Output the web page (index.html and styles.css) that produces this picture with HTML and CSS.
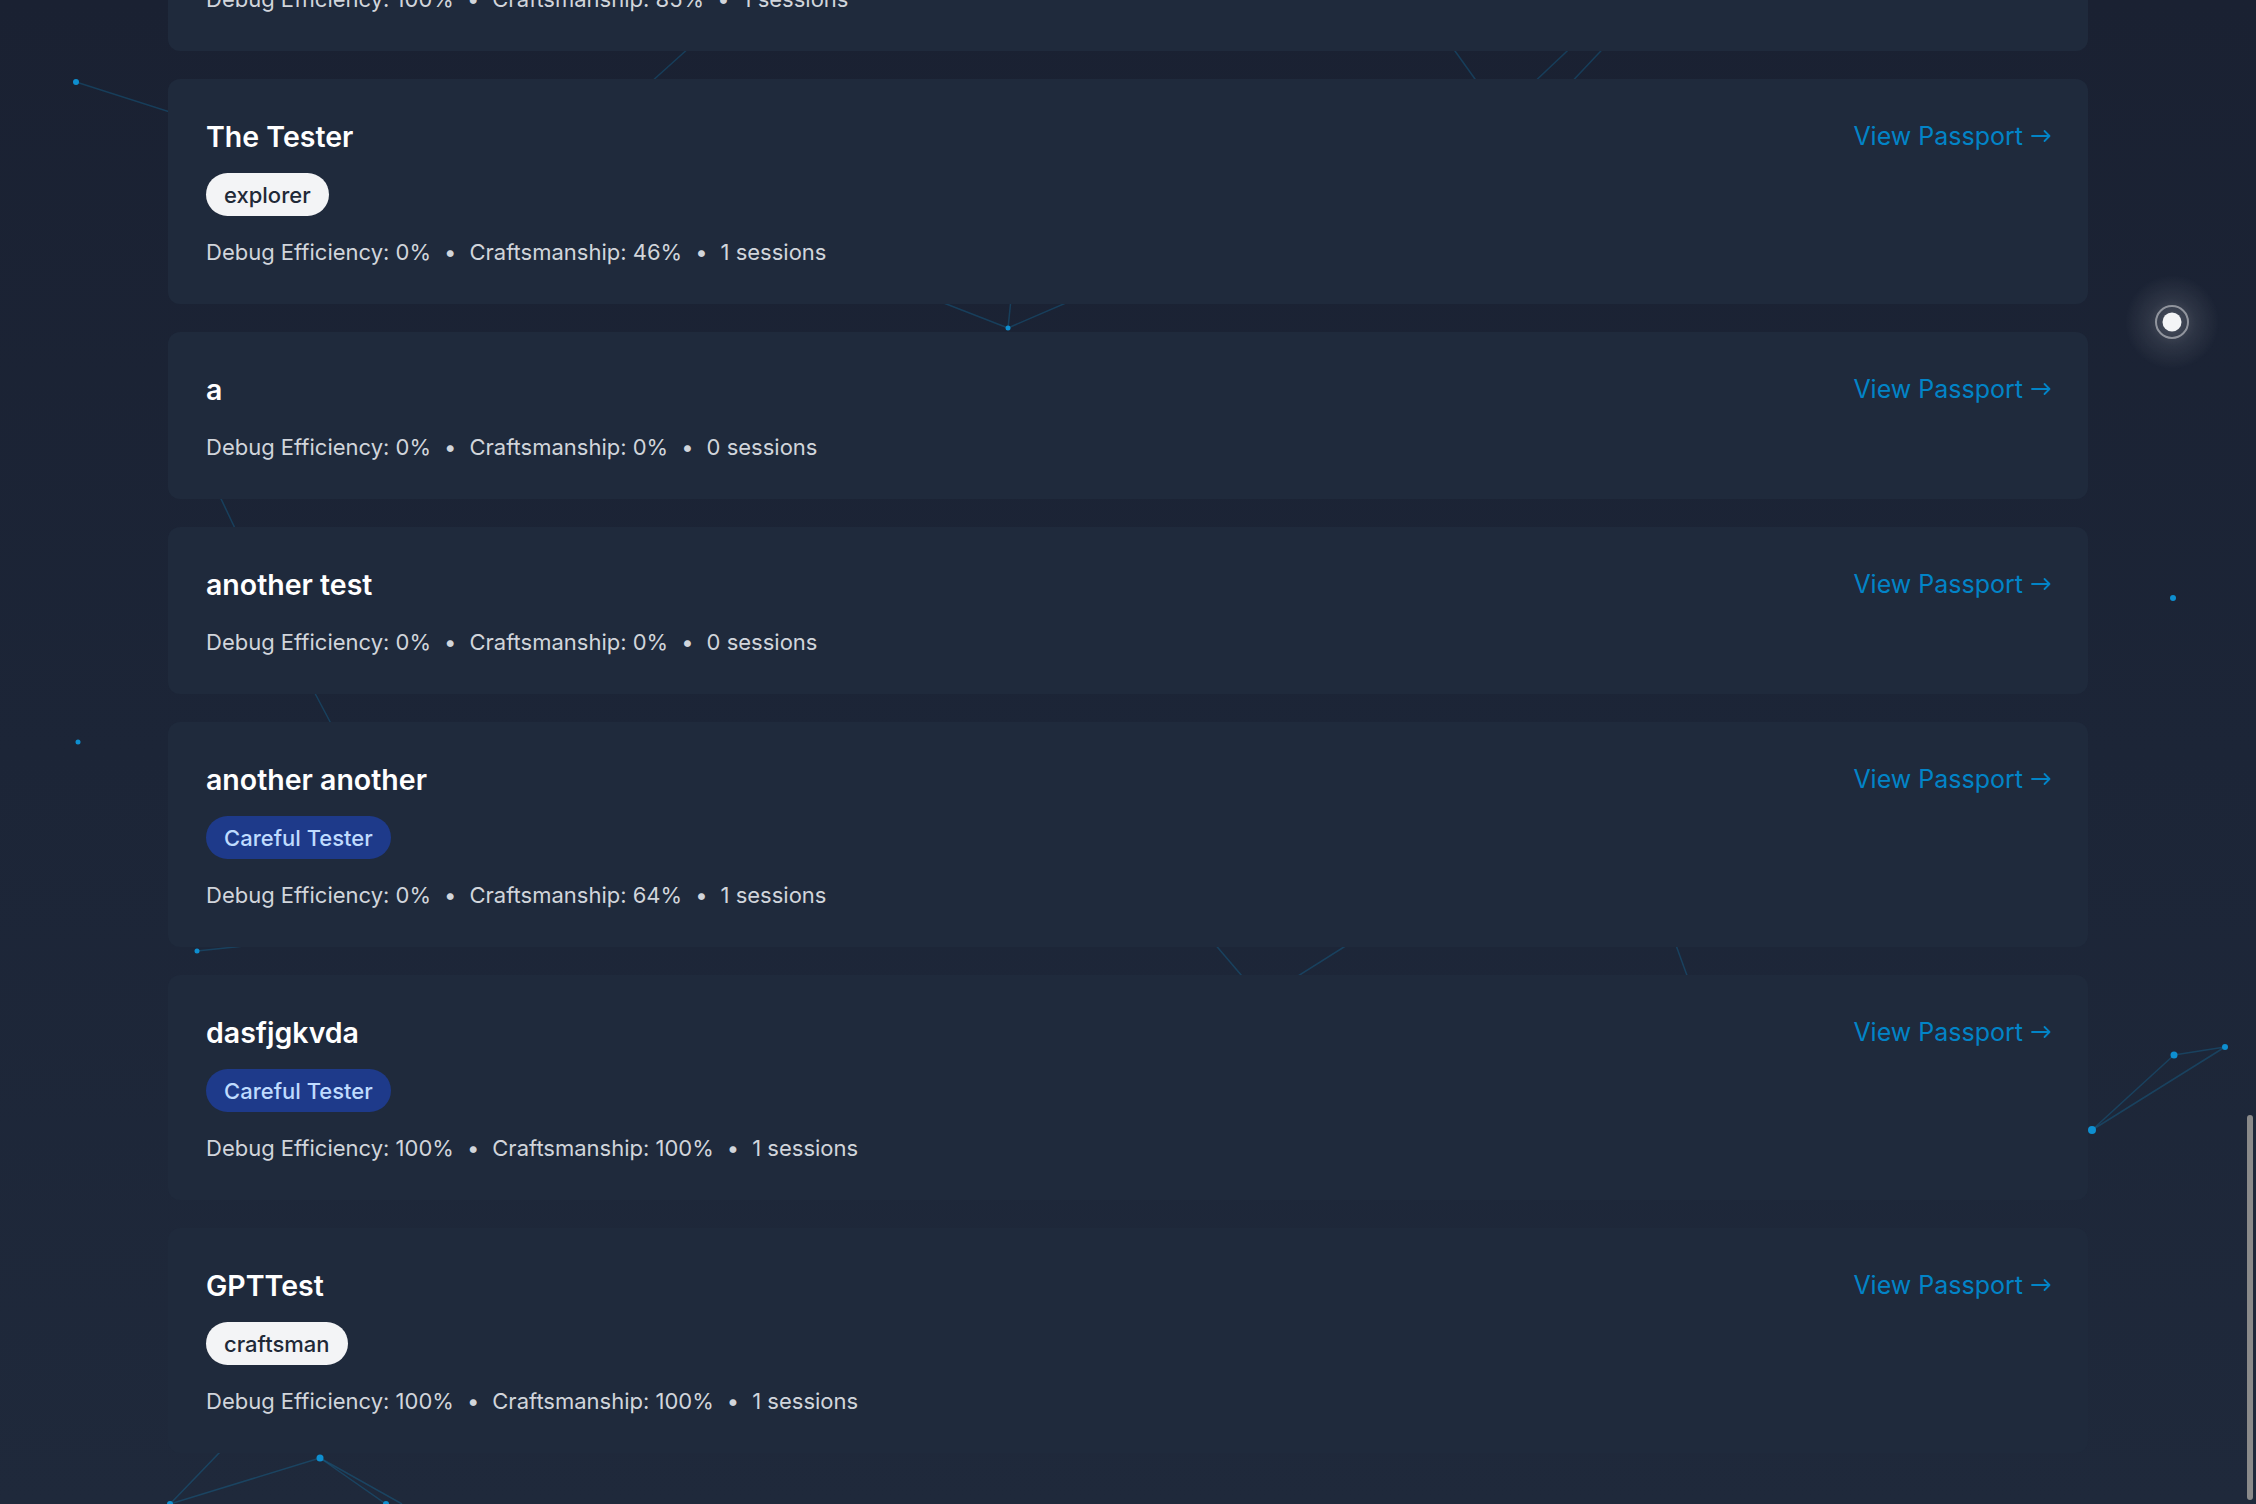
FILE: index.html
```html
<!DOCTYPE html>
<html>
<head>
  <title>Passports</title>
  <link rel="stylesheet" href="styles.css">
</head>
<body>
  <svg class="network-bg" width="2256" height="1504" viewBox="0 0 2256 1504">
    <defs>
      <radialGradient id="cursorGlow">
        <stop offset="0" stop-color="#ffffff" stop-opacity="0.22"/>
        <stop offset="0.5" stop-color="#ffffff" stop-opacity="0.08"/>
        <stop offset="1" stop-color="#ffffff" stop-opacity="0"/>
      </radialGradient>
      <symbol id="arrowRight" viewBox="0 0 20 14">
        <path d="M1 7H18.5M13.5 2L18.5 7L13.5 12" fill="none" stroke="currentColor" stroke-width="1.8" stroke-linecap="round" stroke-linejoin="round"/>
      </symbol>
    </defs>
    <g class="links">
      <line x1="76" y1="82" x2="320" y2="160"/>
      <line x1="720" y1="20" x2="620" y2="110"/>
      <line x1="1440" y1="30" x2="1490" y2="100"/>
      <line x1="1600" y1="20" x2="1510" y2="105"/>
      <line x1="1630" y1="20" x2="1550" y2="105"/>
      <line x1="900" y1="286" x2="1008" y2="328"/>
      <line x1="1110" y1="284" x2="1008" y2="328"/>
      <line x1="1013" y1="280" x2="1008" y2="328"/>
      <line x1="205" y1="465" x2="250" y2="560"/>
      <line x1="300" y1="665" x2="345" y2="750"/>
      <line x1="197" y1="951" x2="300" y2="940"/>
      <line x1="1190" y1="915" x2="1265" y2="1003"/>
      <line x1="1260" y1="1000" x2="1390" y2="918"/>
      <line x1="1665" y1="915" x2="1697" y2="1003"/>
      <line x1="2092" y1="1130" x2="2174" y2="1055"/>
      <line x1="2174" y1="1055" x2="2225" y2="1047"/>
      <line x1="2092" y1="1130" x2="2225" y2="1047"/>
      <line x1="320" y1="1458" x2="170" y2="1504"/>
      <line x1="320" y1="1458" x2="386" y2="1504"/>
      <line x1="320" y1="1458" x2="402" y2="1504"/>
      <line x1="270" y1="1400" x2="170" y2="1504"/>
    </g>
    <g class="nodes">
      <circle cx="76" cy="82" r="3"/>
      <circle cx="1008" cy="328" r="2.5"/>
      <circle cx="2173" cy="598" r="3"/>
      <circle cx="78" cy="742" r="2.5"/>
      <circle cx="197" cy="951" r="2.5"/>
      <circle cx="2092" cy="1130" r="4"/>
      <circle cx="2174" cy="1055" r="3.5"/>
      <circle cx="2225" cy="1047" r="3"/>
      <circle cx="320" cy="1458" r="3.5"/>
      <circle cx="170" cy="1504" r="3"/>
      <circle cx="386" cy="1504" r="3"/>
    </g>
    <circle cx="2172" cy="322" r="48" fill="url(#cursorGlow)"/>
    <circle cx="2172" cy="322" r="16" fill="none" stroke="#ffffff" stroke-opacity="0.45" stroke-width="2"/>
    <circle cx="2172" cy="322" r="9.5" fill="#f3f4f6"/>
  </svg>

  <main class="container">
    <ul class="passport-list">
      <li class="passport-card">
        <div class="passport-info">
          <p class="passport-stats passport-stats-first">Debug Efficiency: 100%<span class="sep">•</span>Craftsmanship: 85%<span class="sep">•</span>1 sessions</p>
        </div>
      </li>
      <li class="passport-card">
        <div class="passport-info">
          <h2 class="passport-name">The Tester</h2>
          <div class="badge-row"><span class="badge badge-light">explorer</span></div>
          <p class="passport-stats">Debug Efficiency: 0%<span class="sep">•</span>Craftsmanship: 46%<span class="sep">•</span>1 sessions</p>
        </div>
        <a class="passport-link" href="#">View Passport <svg class="arrow"><use href="#arrowRight"/></svg></a>
      </li>
      <li class="passport-card">
        <div class="passport-info">
          <h2 class="passport-name">a</h2>
          <p class="passport-stats">Debug Efficiency: 0%<span class="sep">•</span>Craftsmanship: 0%<span class="sep">•</span>0 sessions</p>
        </div>
        <a class="passport-link" href="#">View Passport <svg class="arrow"><use href="#arrowRight"/></svg></a>
      </li>
      <li class="passport-card">
        <div class="passport-info">
          <h2 class="passport-name">another test</h2>
          <p class="passport-stats">Debug Efficiency: 0%<span class="sep">•</span>Craftsmanship: 0%<span class="sep">•</span>0 sessions</p>
        </div>
        <a class="passport-link" href="#">View Passport <svg class="arrow"><use href="#arrowRight"/></svg></a>
      </li>
      <li class="passport-card">
        <div class="passport-info">
          <h2 class="passport-name">another another</h2>
          <div class="badge-row"><span class="badge badge-blue">Careful Tester</span></div>
          <p class="passport-stats">Debug Efficiency: 0%<span class="sep">•</span>Craftsmanship: 64%<span class="sep">•</span>1 sessions</p>
        </div>
        <a class="passport-link" href="#">View Passport <svg class="arrow"><use href="#arrowRight"/></svg></a>
      </li>
      <li class="passport-card">
        <div class="passport-info">
          <h2 class="passport-name">dasfjgkvda</h2>
          <div class="badge-row"><span class="badge badge-blue">Careful Tester</span></div>
          <p class="passport-stats">Debug Efficiency: 100%<span class="sep">•</span>Craftsmanship: 100%<span class="sep">•</span>1 sessions</p>
        </div>
        <a class="passport-link" href="#">View Passport <svg class="arrow"><use href="#arrowRight"/></svg></a>
      </li>
      <li class="passport-card">
        <div class="passport-info">
          <h2 class="passport-name">GPTTest</h2>
          <div class="badge-row"><span class="badge badge-light">craftsman</span></div>
          <p class="passport-stats">Debug Efficiency: 100%<span class="sep">•</span>Craftsmanship: 100%<span class="sep">•</span>1 sessions</p>
        </div>
        <a class="passport-link" href="#">View Passport <svg class="arrow"><use href="#arrowRight"/></svg></a>
      </li>
    </ul>
  </main>

  <div class="scroll-thumb"></div>
</body>
</html>
```

FILE: styles.css
```css
html, body {
  height: 100%;
}

body {
  margin: 0;
  overflow: hidden;
  font-family: 'Inter', 'Noto Sans', sans-serif;
  background: linear-gradient(180deg, #1a2132 0%, #1c2537 50%, #1f293b 100%);
  color: #fff;
}

.network-bg {
  position: fixed;
  top: 0;
  left: 0;
  z-index: 0;
}

.network-bg .links line {
  stroke: #0ea5e9;
  stroke-opacity: 0.22;
  stroke-width: 1.5;
}

.network-bg .nodes circle {
  fill: #0e8fd0;
}

.container {
  position: relative;
  z-index: 1;
  max-width: 1920px;
  margin: 0 auto;
}

.passport-list {
  list-style: none;
  margin: -53px 0 0 0;
  padding: 0;
  display: flex;
  flex-direction: column;
  gap: 28px;
}

.passport-card {
  background-color: #1f2a3c;
  border-radius: 12px;
  padding: 37px 37px 37px 38px;
  display: flex;
  justify-content: space-between;
  align-items: flex-start;
}

.passport-name {
  margin: 0;
  font-size: 28.5px;
  line-height: 42px;
  font-weight: 600;
  color: #fff;
}

.badge-row {
  display: flex;
  margin-top: 15px;
}

.badge {
  font-size: 22px;
  line-height: 30px;
  font-weight: 500;
  padding: 6.5px 18px;
  border-radius: 999px;
}

.badge-light {
  background-color: #f3f4f6;
  color: #1f2937;
}

.badge-blue {
  background-color: #1e3a8a;
  color: #bfdbfe;
}

.passport-stats {
  margin: 21px 0 0 0;
  font-size: 22px;
  line-height: 30px;
  color: #d1d5db;
}

.passport-stats-first {
  margin-top: 0;
}

.sep {
  margin: 0 13px;
}

.passport-link {
  font-size: 25px;
  line-height: 40px;
  color: #0284c7;
  text-decoration: none;
  white-space: nowrap;
}

.arrow {
  width: 20px;
  height: 14px;
  margin-left: 1px;
  vertical-align: 2px;
}

.scroll-thumb {
  position: fixed;
  right: 3px;
  top: 1115px;
  width: 6px;
  height: 385px;
  border-radius: 3px;
  background-color: #8a8a8a;
  z-index: 2;
}
```
